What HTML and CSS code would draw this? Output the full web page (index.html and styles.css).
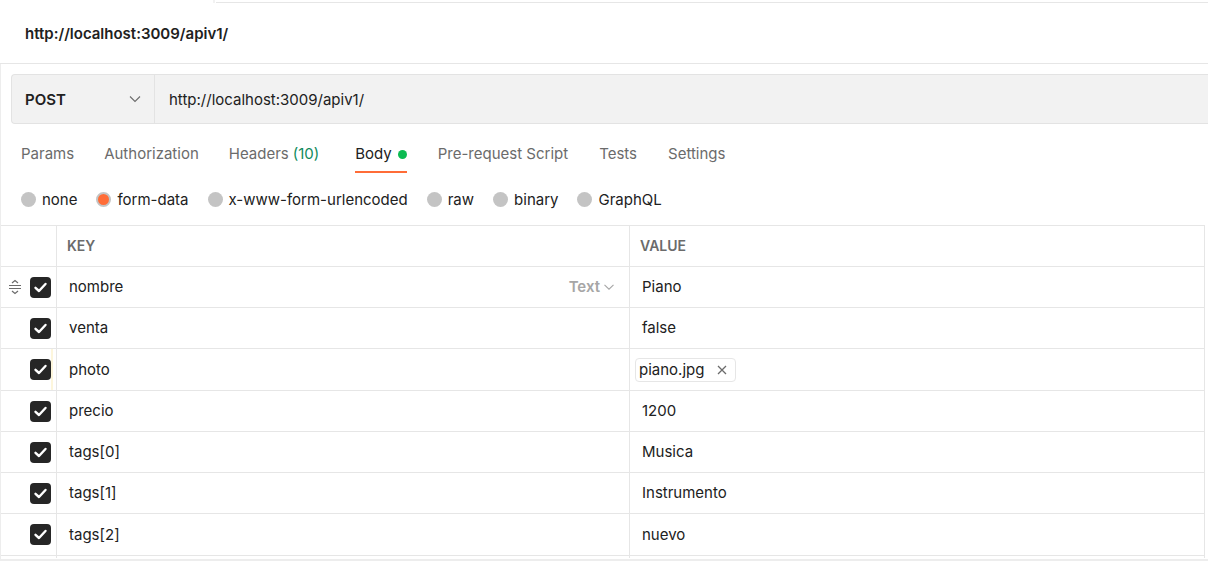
FILE: index.html
```html
<!DOCTYPE html>
<html>
<head>
<meta charset="utf-8">
<link rel="stylesheet" href="styles.css">
</head>
<body>
<div class="tabstrip"><div class="tabstrip-l"></div><div class="tabstrip-r"></div></div>
<div class="titlebar"><span class="title">http://localhost:3009/apiv1/</span></div>
<div class="main">
  <div class="urlrow">
    <div class="urlbar">
      <div class="method"><span>POST</span>
        <svg class="chev" width="12" height="8" viewBox="0 0 12 8"><path d="M1 1.5 L6 6.5 L11 1.5" fill="none" stroke="#6b6b6b" stroke-width="1.1"/></svg>
      </div>
      <div class="url">http://localhost:3009/apiv1/</div>
    </div>
  </div>
  <div class="tabs">
    <div class="tab">Params</div>
    <div class="tab tab-auth">Authorization</div>
    <div class="tab tab-headers">Headers <span class="count">(10)</span></div>
    <div class="tab active">Body <span class="dot"></span></div>
    <div class="tab">Pre-request Script</div>
    <div class="tab">Tests</div>
    <div class="tab">Settings</div>
  </div>
  <div class="radios">
    <div class="radio"><span class="circle"></span>none</div>
    <div class="radio"><span class="circle on"></span>form-data</div>
    <div class="radio"><span class="circle"></span>x-www-form-urlencoded</div>
    <div class="radio"><span class="circle"></span>raw</div>
    <div class="radio"><span class="circle"></span>binary</div>
    <div class="radio"><span class="circle"></span>GraphQL</div>
  </div>
  <div class="table">
    <div class="row head">
      <div class="c0"></div>
      <div class="c1">KEY</div>
      <div class="c2">VALUE</div>
    </div>
    <div class="row">
      <div class="c0">
        <svg class="drag" width="14" height="16" viewBox="0 0 14 16"><path d="M4 4 L7 1.5 L10 4 M1 6.5 H13 M1 9.5 H13 M4 12 L7 14.5 L10 12" fill="none" stroke="#6b6b6b" stroke-width="1.2"/></svg>
        <span class="cb"><svg width="21" height="21" viewBox="0 0 21 21"><path d="M5.5 10.8 L9 14 L15.5 7" fill="none" stroke="#fff" stroke-width="2.4" stroke-linecap="round" stroke-linejoin="round"/></svg></span>
      </div>
      <div class="c1 key"><span>nombre</span><span class="type">Text <svg width="10" height="6" viewBox="0 0 10 6"><path d="M0.5 0.8 L5 5.2 L9.5 0.8" fill="none" stroke="#a6a6a6" stroke-width="1.1"/></svg></span></div>
      <div class="c2 val">Piano</div>
    </div>
    <div class="row">
      <div class="c0"><span class="cb"><svg width="21" height="21" viewBox="0 0 21 21"><path d="M5.5 10.8 L9 14 L15.5 7" fill="none" stroke="#fff" stroke-width="2.4" stroke-linecap="round" stroke-linejoin="round"/></svg></span></div>
      <div class="c1 key">venta</div>
      <div class="c2 val">false</div>
    </div>
    <div class="row tall">
      <div class="c0 marked"><span class="cb"><svg width="21" height="21" viewBox="0 0 21 21"><path d="M5.5 10.8 L9 14 L15.5 7" fill="none" stroke="#fff" stroke-width="2.4" stroke-linecap="round" stroke-linejoin="round"/></svg></span></div>
      <div class="c1 key">photo</div>
      <div class="c2 valfile"><span class="chip">piano.jpg <svg class="x" width="10" height="10" viewBox="0 0 10 10"><path d="M1 1 L9 9 M9 1 L1 9" fill="none" stroke="#6b6b6b" stroke-width="1.3"/></svg></span></div>
    </div>
    <div class="row">
      <div class="c0"><span class="cb"><svg width="21" height="21" viewBox="0 0 21 21"><path d="M5.5 10.8 L9 14 L15.5 7" fill="none" stroke="#fff" stroke-width="2.4" stroke-linecap="round" stroke-linejoin="round"/></svg></span></div>
      <div class="c1 key">precio</div>
      <div class="c2 val">1200</div>
    </div>
    <div class="row">
      <div class="c0"><span class="cb"><svg width="21" height="21" viewBox="0 0 21 21"><path d="M5.5 10.8 L9 14 L15.5 7" fill="none" stroke="#fff" stroke-width="2.4" stroke-linecap="round" stroke-linejoin="round"/></svg></span></div>
      <div class="c1 key">tags[0]</div>
      <div class="c2 val">Musica</div>
    </div>
    <div class="row">
      <div class="c0"><span class="cb"><svg width="21" height="21" viewBox="0 0 21 21"><path d="M5.5 10.8 L9 14 L15.5 7" fill="none" stroke="#fff" stroke-width="2.4" stroke-linecap="round" stroke-linejoin="round"/></svg></span></div>
      <div class="c1 key">tags[1]</div>
      <div class="c2 val">Instrumento</div>
    </div>
    <div class="row tall">
      <div class="c0"><span class="cb"><svg width="21" height="21" viewBox="0 0 21 21"><path d="M5.5 10.8 L9 14 L15.5 7" fill="none" stroke="#fff" stroke-width="2.4" stroke-linecap="round" stroke-linejoin="round"/></svg></span></div>
      <div class="c1 key">tags[2]</div>
      <div class="c2 val">nuevo</div>
    </div>
    <div class="row stub">
      <div class="c0"></div>
      <div class="c1"></div>
      <div class="c2"></div>
    </div>
  </div>
  <div class="bottombar"></div>
</div>
</body>
</html>
```
FILE: styles.css
```css
html, body {
  margin: 0;
  padding: 0;
  background: #fff;
}
body {
  width: 1208px;
  height: 561px;
  overflow: hidden;
  font-family: Inter, "Noto Sans", sans-serif;
  font-size: 15px;
  color: #212121;
}
.tabstrip {
  display: flex;
  height: 3px;
}
.tabstrip-l {
  width: 213px;
  border-right: 2px solid #f2f2f2;
}
.tabstrip-r {
  flex: 1;
  margin-left: 1px;
  height: 2px;
  border-bottom: 1px solid #e6e6e6;
}
.titlebar {
  height: 60px;
  display: flex;
  align-items: center;
  padding-left: 25px;
  border-bottom: 1px solid #e6e6e6;
}
.title {
  font-weight: 600;
  font-size: 15px;
}
.main {
  border-left: 1px solid #ededed;
}
.urlrow {
  padding: 10px 0 0 10px;
}
.urlbar {
  display: flex;
  height: 48px;
  background: #f2f2f2;
  border: 1px solid #e3e3e3;
  border-right: none;
  border-radius: 4px 0 0 4px;
}
.method {
  width: 129px;
  padding-left: 13px;
  display: flex;
  align-items: center;
  justify-content: space-between;
  border-right: 1px solid #e3e3e3;
  font-weight: 600;
}
.chev {
  margin-right: 13px;
}
.url {
  display: flex;
  align-items: center;
  padding-left: 14px;
}
.tabs {
  display: flex;
  gap: 31px;
  padding-left: 20px;
  margin-top: 10px;
}
.tab {
  padding-top: 10px;
  padding-bottom: 7px;
  line-height: 20px;
  border-bottom: 2px solid transparent;
  color: #6b6b6b;
  display: flex;
  align-items: center;
}
.tab-auth {
  margin-left: -1px;
  margin-right: -1px;
}
.tab-headers {
  margin-right: 5px;
}
.count {
  color: #0f8a5c;
  margin-left: 4px;
}
.tab.active {
  color: #212121;
  border-bottom-color: #ff6c37;
}
.dot {
  width: 9px;
  height: 9px;
  border-radius: 50%;
  background: #0cbb52;
  margin-left: 6px;
}
.radios {
  display: flex;
  align-items: center;
  gap: 19px;
  height: 52px;
  padding-left: 20px;
}
.radio {
  display: flex;
  align-items: center;
  gap: 6px;
  color: #212121;
}
.circle {
  width: 15px;
  height: 15px;
  border-radius: 50%;
  background: #c4c4c4;
  box-sizing: border-box;
}
.circle.on {
  background: #ff6c37;
  border: 2px solid #c4c4c4;
}
.table {
  border-top: 1px solid #e6e6e6;
  width: 1204px;
}
.row {
  display: flex;
  height: 40px;
  border-bottom: 1px solid #e6e6e6;
}
.row.tall {
  height: 41px;
}
.row.stub {
  height: 2px;
  border-bottom: none;
}
.c0 {
  border-right: 1px solid #e6e6e6;
  display: flex;
  align-items: center;
  justify-content: flex-end;
  padding-right: 5px;
  box-sizing: content-box;
  flex: none;
  width: 50px;
}
.c0.marked {
  box-shadow: inset -3px 0 0 #fff, inset -5px 0 0 #fdf6dc;
}
.c1 {
  width: 573px;
  border-right: 1px solid #e6e6e6;
  display: flex;
  align-items: center;
  box-sizing: border-box;
  flex: none;
}
.c2 {
  flex: 1;
  border-right: 1px solid #e6e6e6;
  display: flex;
  align-items: center;
}
.head {
  height: 40px;
}
.head .c1, .head .c2 {
  padding-left: 10px;
  padding-bottom: 1px;
  font-weight: 600;
  font-size: 14px;
  color: #6b6b6b;
}
.key {
  padding-left: 12px;
  padding-right: 15px;
  padding-bottom: 1px;
  justify-content: space-between;
}
.val {
  padding-left: 12px;
  padding-bottom: 1px;
}
.valfile {
  padding-left: 5px;
}
.drag {
  margin-right: 8px;
}
.cb {
  width: 21px;
  height: 21px;
  border-radius: 4px;
  background: #262626;
  display: flex;
}
.type {
  color: #a6a6a6;
  font-weight: 600;
  display: flex;
  align-items: center;
  gap: 4px;
}
.chip {
  display: flex;
  align-items: center;
  height: 22px;
  padding: 0 8px 0 3px;
  border: 1px solid #e6e6e6;
  border-radius: 4px;
  gap: 13px;
}
.bottombar {
  height: 4px;
  background: #ededed;
  margin-top: 1px;
}
```
